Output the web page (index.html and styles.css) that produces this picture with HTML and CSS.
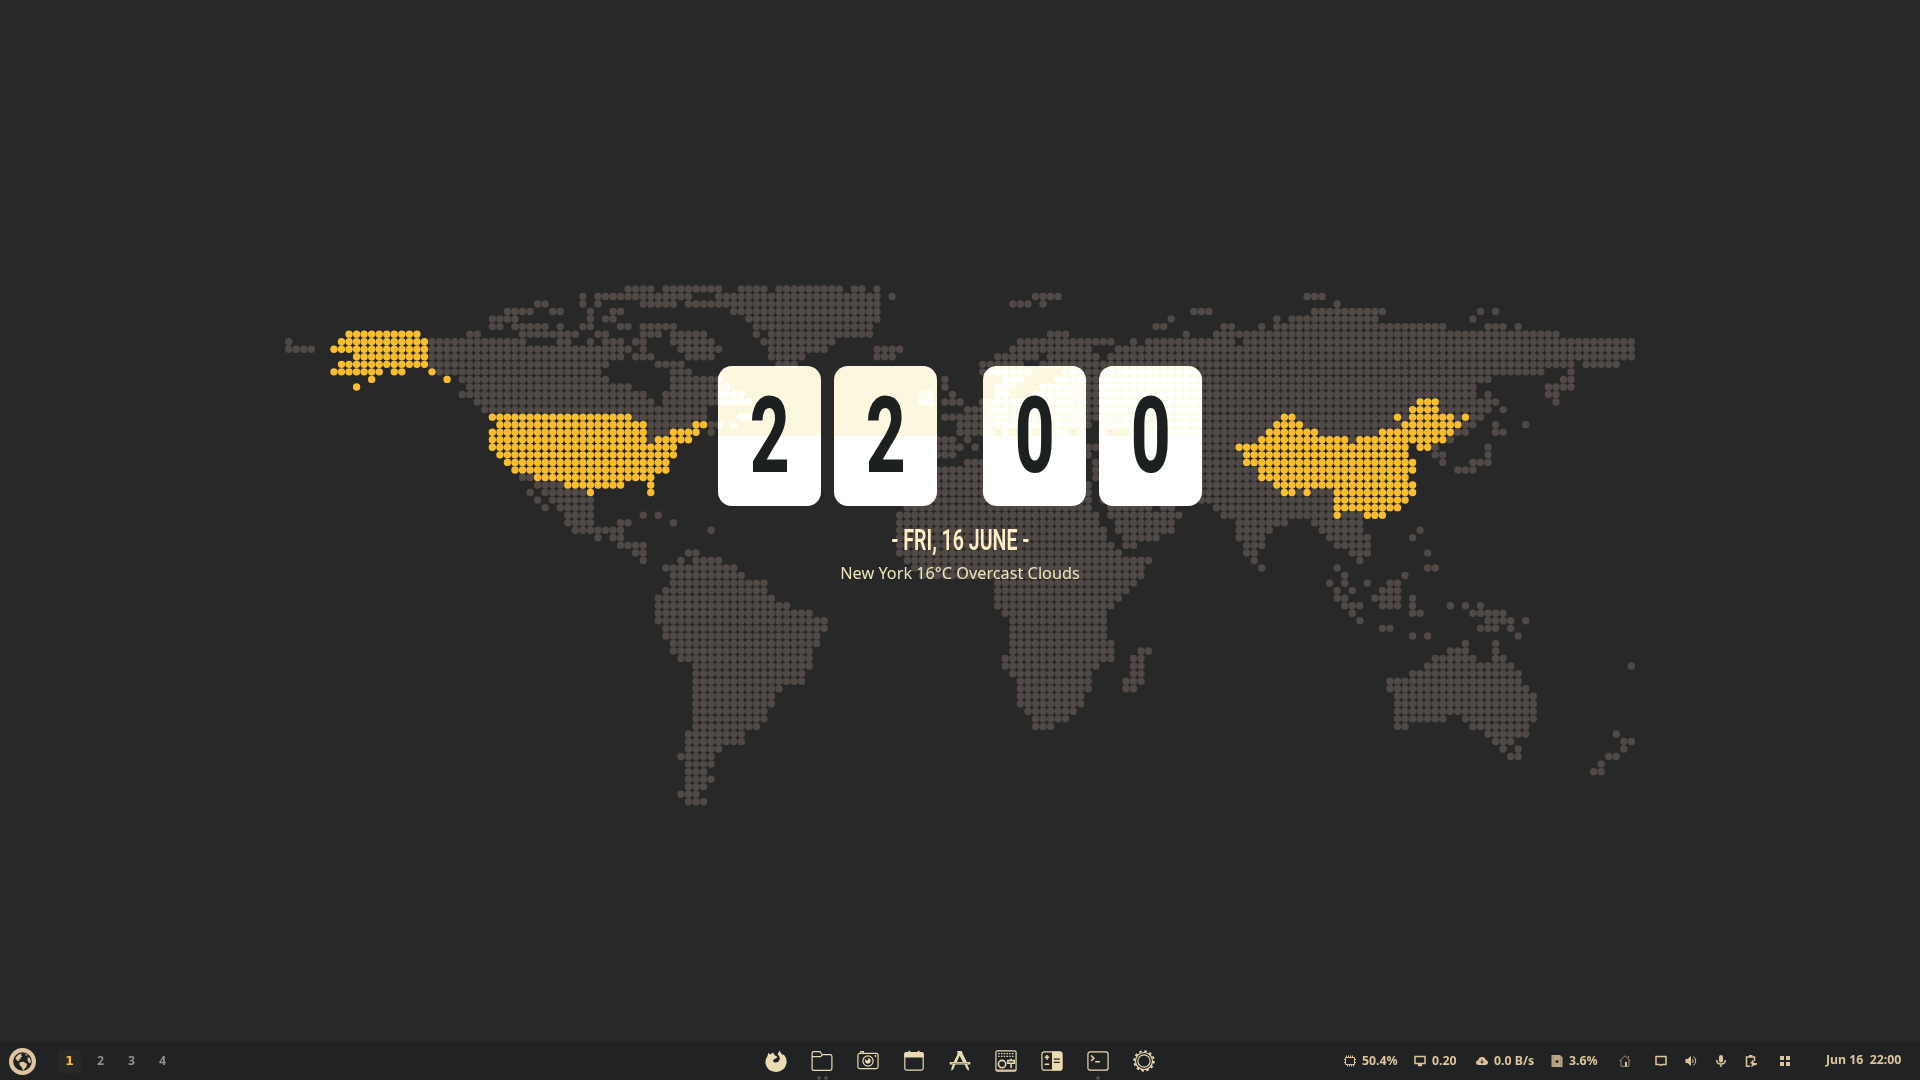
FILE: index.html
```html
<!DOCTYPE html>
<html lang="en">
<head>
<meta charset="utf-8">
<title>Desktop</title>
<link rel="stylesheet" href="styles.css">
</head>
<body>
<main class="desktop">
  <svg class="map" viewBox="0 0 1920 1042" aria-hidden="true"><path class="land" id="land"/><path class="mark" id="mark"/></svg>
  <section class="widget">
    <div class="clock">
      <div class="card"><span class="digit">2</span></div>
      <div class="card"><span class="digit">2</span></div>
      <div class="card hour-gap"><span class="digit">0</span></div>
      <div class="card"><span class="digit">0</span></div>
    </div>
    <div class="date"><span class="date-text">- FRI, 16 JUNE -</span></div>
    <div class="weather">New York 16°C Overcast Clouds</div>
  </section>
</main>
<footer class="bar">
  <div class="left">
    <svg class="logo" viewBox="0 0 27 27"><circle cx="13.5" cy="13.5" r="11.4" fill="none" stroke="#dec59b" stroke-width="4.2"/><path fill="#dec59b" d="M6.3 10.5Q8 6.5 12.8 5.4l-.6 2 1 1-1.8 1.3.2 1.5-2.2.6 1 1.6-1.7-.3zM10.5 14.200l4-.5 3.600 2.200-.8 3.200-3.300 3.500-1.400-3.700-2-1.800zM18.7 9l2.3 1.2.9 3.5-.8 1.8-2.4-2.3zM15.5 5.8l3.2 1.3-1.6.6z"/></svg>
    <nav class="spaces"><span class="space on">1</span><span class="space">2</span><span class="space">3</span><span class="space">4</span></nav>
  </div>
  <div class="dock">
    <span class="app"><svg viewBox="0 0 24 24"><path class="f" d="M3.700 2.900 5.500 5q1.700-.6 3-2h.7q.3 1.800 1.800 3l2.500 1.300-.7 1.500-3.300 1.500q-1.500 1.700.5 3 3.500 1.200 5.500-1.800 1.800-4-1.700-7L16 .5q.5 3 3.500 5l1-.5q3.800 4.200 3 9.300Q21.800 23.500 12 24 2.500 23.500.600 15 .1 9.500 2.500 7z"/></svg></span>
    <span class="app"><svg viewBox="0 0 24 24"><path class="s" d="M1.2 8V3.700q0-2 2-2h5.600q1.400 0 2 1.200l.8 1.500q.4.600 1.400.600h7.800q2 0 2 2v13.300q0 2-2 2H3.200q-2 0-2-2zq0-.7 1.500-.7h7.300q.8 0 1.200-.7L12.500 5"/></svg><i class="dots"><b></b><b></b></i></span>
    <span class="app"><svg viewBox="0 0 24 24"><rect class="s" x="1" y="3.700" width="22" height="16.600" rx="2"/><path class="s" d="M4 3V1.700h3V3"/><circle class="s" cx="12" cy="12" r="5.600"/><path class="f" d="M9 9q.2 2 2 2.700 1.500-.2 1.200-3 3 .7 2.800 3.600-.6 2.700-3 2.700-3-.2-3.200-3z"/><circle class="f" cx="20.200" cy="6.500" r="1"/></svg></span>
    <span class="app"><svg viewBox="0 0 24 24"><rect class="s" x="2" y="2.700" width="20" height="19.300" rx="2"/><path class="f" d="M1.500 8.200V4.200q0-2 2-2H6V.8h2v1.400h8V.8h2v1.400h2.500q2 0 2 2v4z"/></svg></span>
    <span class="app"><svg viewBox="0 0 24 24"><path class="f" d="M9 1.200h5l1.200 3.300 4.200 8.500H23.200v2.700h-3.400l2 4.500-.2 2.500-2.100-1.600-2.500-5.400H6.900l-2.200 5.200-2 1.800-.2-2.500 1.700-4.500H.8V13h4.300L9.200 5zM11.600 6.300 8.600 13h6.500z"/><path d="M3 14.500h18" stroke="#85795f" stroke-width="1"/></svg></span>
    <span class="app"><svg viewBox="0 0 24 24"><rect class="s" x="1" y="1" width="22" height="22" rx="1.500"/><path class="s" d="M1 22h22" stroke-width="2.500"/><path class="s" stroke-dasharray="1.600 1.400" d="M3.500 4h18M3.500 7h18"/><circle class="s t" cx="7.700" cy="15.300" r="4"/><path class="s t" d="M17.500 9.500v2M17.500 14.500v5M14 11.500h7v3h-7z"/></svg></span>
    <span class="app"><svg viewBox="0 0 24 24"><rect class="s" x="1" y="2" width="22" height="20" rx="2.500"/><path class="f" d="M12 2h9q2 0 2 2v16q0 2-2 2h-9z"/><path class="s t" d="M4 8h5M6.500 5.500v5M4 15.500h5"/><path class="k" d="M14 10h6.500M14 13.500h6.500"/></svg></span>
    <span class="app"><svg viewBox="0 0 24 24"><rect class="s" x="1" y="2" width="22" height="20" rx="2.500"/><path class="s t" d="M4.500 6 7.500 9l-3 3M9 12.800h5"/></svg><i class="dots"><b></b></i></span>
    <span class="app"><svg viewBox="0 0 24 24"><circle class="s" cx="12" cy="12" r="9.300"/><circle class="s" cx="12" cy="12" r="6.700"/><circle cx="12" cy="12" r="10.700" fill="none" stroke="#ebdbb2" stroke-width="2" stroke-dasharray="2.800 2.802"/></svg></span>
  </div>
  <div class="right">
    <div class="stat cpu"><svg viewBox="0 0 12 12"><path class="s" d="M1.500 2.500h9v7h-9zM2.500 .5v2M4.500 .5v2M6.500 .5v2M8.500 .5v2M3.500 9.500v2M5.500 9.500v2M7.500 9.500v2M9.500 9.500v2M0 4.500h1M0 7.500h1M11 4.500h1M11 7.500h1"/></svg><span>50.4%</span></div>
    <div class="stat load"><svg viewBox="0 0 12 12"><path class="s t" d="M1 1.500h10v7H1z"/><path class="f" d="M4 9h4v2.200H4z"/></svg><span>0.20</span></div>
    <div class="stat net"><svg viewBox="0 0 12 12"><path class="f" d="M3 10Q0 10 0 7.500 0 5.500 2.200 5.200 3 2 6 2q3.200 0 3.800 3 2.200.2 2.200 2.500T9.600 10z"/><path d="M6 4.500V8M4.300 6.500 6 8.300l1.700-1.800" stroke="#202223" fill="none"/></svg><span>0.0 B/s</span></div>
    <div class="stat disk"><svg viewBox="0 0 12 12"><path fill="#bba785" d="M.5 0H9l2.500 2.500V12H.5z"/><circle cx="6" cy="6.500" r="1.500" fill="#202223"/><path d="M2.500 1v10M9.500 2v9" stroke="#a39272" fill="none"/></svg><span>3.6%</span></div>
    <div class="tray">
      <svg viewBox="0 0 12 12"><path class="s dim" d="M.5 6 6 .8 11.500 6M2 5v6.300h8V5M9.500 1v2"/><path class="f" d="M6 7h2v4.500H6z"/></svg>
      <svg viewBox="0 0 12 12"><path class="s t" d="M1 1.500h10v8H7.500L6 10.200 4.500 9.500H1z"/></svg>
      <svg viewBox="0 0 12 12"><path class="f" d="M.5 4h2L6 1v10L2.500 8h-2z"/><path class="s" d="M7.500 4q1.500 2 0 4M8.500 1.500q4.500 4.500 0 9"/></svg>
      <svg viewBox="0 0 12 12"><rect class="f" x="4" y="0" width="4" height="7.500" rx="2"/><path class="s t" d="M1.700 5q0 4 4.300 4t4.300-4M6 9v3"/></svg>
      <svg viewBox="0 0 12 12"><path class="s t" d="M5 11.200H1.500V2h8v4M4 .8h3.500"/><path class="f" d="M8 4.500 5 8.500h2L6 12l3-1.500L12 9.500V8H9z"/></svg>
      <svg viewBox="0 0 12 12"><path class="f" d="M1 1h4v4H1zM7 1h4v4H7zM1 7h4v4H1zM7 7h4v4H7z"/></svg>
    </div>
    <div class="time">Jun 16&nbsp; 22:00</div>
  </div>
</footer>
<script src="map.js"></script>
</body>
</html>
```
FILE: styles.css
```css
* { box-sizing: border-box; }
body {
  margin: 0;
  width: 1920px;
  height: 1080px;
  display: flex;
  flex-direction: column;
  overflow: hidden;
  background: #282828;
  color: #fbf1c7;
  font-family: "Noto Sans", "Open Sans", sans-serif;
}
.desktop { flex: 1; display: grid; min-height: 0; }
.map, .widget { grid-area: 1 / 1; }
.map { width: 1920px; height: 1042px; }
.land, .mark { fill: none; stroke-width: 7.4; stroke-linecap: round; }
.land { stroke: #504945; }
.mark { stroke: #fabd2f; }
.widget { display: flex; flex-direction: column; align-items: center; padding-top: 366px; }
.clock { display: flex; gap: 13px; }
.card { width: 103px; height: 140px; display: grid; grid-template-rows: 70px 70px; }
.card::before, .card::after { content: ""; grid-column: 1; }
.card::before { grid-row: 1; background: #d4cfb7; border-radius: 14px 14px 0 0; mix-blend-mode: plus-lighter; }
.card::after { grid-row: 2; background: #fff; border-radius: 0 0 14px 14px; }
.digit {
  grid-area: 1 / 1 / 3 / 2;
  z-index: 1;
  place-self: center;
  color: #1d2021;
  font: 800 105px/140px Roboto, sans-serif;
  transform: translate(.5px, 1px) scaleX(.66);
}
.hour-gap { margin-left: 33px; }
.date { margin-top: 16px; height: 36px; }
.date-text { display: block; font: 600 29px/36px Roboto, sans-serif; color: #fdeec5; transform: scaleX(.675); white-space: nowrap; }
.weather { margin-top: 4px; font-size: 16.25px; line-height: 22px; color: #efe5bb; }

.bar {
  height: 38px;
  display: grid;
  grid-template-columns: 1fr 414px 1fr;
  background: #202223;
  color: #dec59b;
  font: 700 12.300px/38px "Noto Sans", sans-serif;
}
.left { display: flex; align-items: center; padding-left: 9px; }
.logo { width: 27px; height: 27px; }
.spaces { display: flex; gap: 8px; margin-left: 22px; }
.space { width: 23px; height: 23px; border-radius: 3px; text-align: center; line-height: 22px; color: #928f8a; }
.space.on { background: #282828; color: #fabd2f; font-family: "DejaVu Sans", sans-serif; }
.dock { display: flex; }
.app { width: 46px; height: 38px; display: flex; flex-direction: column; align-items: center; padding-top: 8px; }
.app svg { width: 22px; height: 22px; flex: none; }
.dots { display: flex; gap: 3px; margin-top: 4px; }
.dots b { width: 4px; height: 4px; border-radius: 50%; background: #504945; }
.f { fill: #ebdbb2; }
.s { fill: none; stroke: #ebdbb2; stroke-width: 1.3; }
.t { stroke-width: 1.7; }
.k { fill: none; stroke: #202223; stroke-width: 1.5; }
.right { display: flex; align-items: center; justify-content: flex-end; padding-right: 19px; }
.right .f { fill: #dec59b; }
.right .s { stroke: #dec59b; stroke-width: 1; }
.right .t { stroke-width: 1.5; }
.right .dim { stroke: #9b8c70; }
.right svg { width: 12px; height: 12px; flex: none; }
.stat { display: flex; align-items: center; gap: 6px; white-space: nowrap; line-height: 36px; }
.cpu { width: 70px; }
.load { width: 62px; }
.net { width: 75px; }
.disk { width: 68px; }
.tray { display: grid; grid-template-columns: 36px 30px 30px 30px 34px 12px; width: 172px; margin-right: 35px; }
.time { width: 75px; white-space: nowrap; line-height: 36px; padding-bottom: 2px; }
```
FILE: map.js
```js
// Column runs for each row of the dotted world map.
const land = [
  "45-48 50-57 60-63 65-73 75-76 78",
  "39 41-53 57-78 80 99-102 135-137",
  "33-34 39 41 47-51 53-78 96-98 100 139",
  "29-32 35-36 40 43-44 59-78 120-122 136-145 158 160",
  "27-30 40 42-43 61-78 117 131 133-144 157",
  "27-28 30-34 36 39-40 44-45 47-51 62-77 115-116 124-125 129 131-153 159-161 163",
  "24-25 31-38 41-42 47-49 51-55 62 64-77 101-103 119 123-168",
  "0 19-31 36-37 40 42-44 46-47 51-56 63-72 97-109 112 114-125 127-178",
  "0-3 19-45 47 52-57 64-71 78-81 96-106 110-178",
  "19-44 46-48 53-56 64-68 78-80 94-99 101-107 109-178",
  "19-42 49-52 65-67 92-97 100-170 172-176",
  "20-41 51-53 92-98 103-166 170",
  "23-42 51-57 87 95-97 102-159 169-170",
  "24-45 51-58 87 94-96 100-157 167-170",
  "23-47 50-60 84-85 88 94-95 99-157 159 167-168",
  "25-48 50-61 84-85 87-89 92-149 153-160 168",
  "26-55 90-148 153-159 161",
  "46-55 60-61 87-131 134-146 148 155 157-158",
  "48-53 56-57 59 89-106 108-130 135-147 156-157 160 164",
  "48-50 56 89-93 95 98 100-103 105 108 112-129 137-144 155-156 160-161",
  "48 86-88 90 112-128 141 154",
  "86-89 91 106-107 112-125 152 159",
  "86-88 106 110-126 152-153 159",
  "90-105 107 110-126 153 157-159",
  "86-105 107 110-128 155-157",
  "31-32 86-105 107-128",
  "33-36 86-106 108-130",
  "32 34-39 86-106 108-131 134 136-138",
  "33 35-40 84-106 108-138",
  "34 36-40 82-106 109-114 116-117 123-138",
  "37-40 47 49 81-107 109-118 124-138 140-142",
  "37-40 44-45 51 81-107 110-117 126-132 136-142",
  "38-44 56 81-108 110-117 126-130 137-142 150",
  "41 43-44 81-108 111-115 126-129 138-143 149",
  "44-47 81-109 111-112 127-129 139-143",
  "46-47 53-54 81-110 127-128 141-143 151",
  "47 52 54-57 82-114 128 142",
  "50-59 83-113 129 139 151-152",
  "51-60 84-113 140 148",
  "51-63 94-112 138 140 143 146-147",
  "50-63 94-111 139 141 145-147",
  "49-64 94-110 139-140 144-147 149",
  "49-66 94-109 140-142 145-147 149 154 156 158",
  "49-69 95-108 141 149-150 157-161",
  "49-71 96-108 142 159-162 164",
  "50-71 96-108 145-146 158-160 162",
  "50-70 96-108 149 151 163",
  "51-70 96-109 156 160",
  "51-69 96-109 113-114 154-156 160",
  "52-69 95-109 112-113 152-157 160-161",
  "54-69 95-107 112-113 151-162 178",
  "54-68 96-106 112-113 149-163",
  "54-68 97-106 111-113 146-163",
  "54-65 97-106 111-112 146-164",
  "54-64 97-105 147-165",
  "54-64 97-105 147-165",
  "54-63 98-104 147-165",
  "54-63 99-103 147-153 156-165",
  "54-62 99-101 147-148 157-164",
  "53-60 159-164 176",
  "53-60 160-162 177-178",
  "53-57 161 163 177",
  "52-56 162-163 175-176",
  "53-56 174",
  "53-55 173-174",
  "53-56",
  "53-55",
  "52-54",
  "53-55"
];
const highlighted = {
  6: "8-17", 7: "7-18", 8: "6-18", 9: "9-18", 10: "7-18", 11: "6-12 14-15 19",
  12: "11 21", 13: "9", 15: "150-152", 16: "149-152",
  17: "27-45 132-133 147 149-154 156",
  18: "28-47 54-55 131-134 148-155",
  19: "27-47 51-54 130-136 145-154",
  20: "27-47 49-53 129-140 142-153",
  21: "27-51 126-148 150-151",
  22: "28-51 127-148",
  23: "29-50 127-149",
  24: "30-50 129-149",
  25: "33-48 129-148",
  26: "37-44 48 131-149",
  27: "40 48 132-133 135 139-149",
  28: "139-148", 29: "139-147", 30: "139 143-145"
};
const pitch = 7.543;
function dots(row, runs) {
  let d = "";
  for (const run of runs.split(" ")) {
    const [a, b = a] = run.split("-").map(Number);
    for (let c = a; c <= b; c++) {
      d += `M${(288.7 + c * pitch).toFixed(2)} ${(288.9 + row * pitch).toFixed(2)}h0`;
    }
  }
  return d;
}
document.getElementById("land").setAttribute("d", land.map((runs, r) => dots(r, runs)).join(""));
document.getElementById("mark").setAttribute("d", Object.entries(highlighted).map(([r, runs]) => dots(+r, runs)).join(""));
```
